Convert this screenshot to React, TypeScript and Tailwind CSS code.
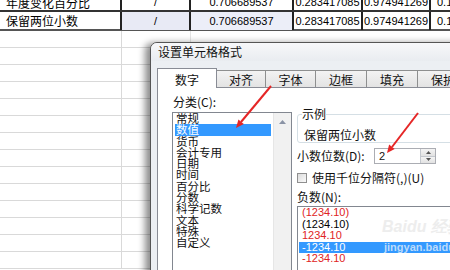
import React from "react";

const ZH = "font-['Noto_Sans_CJK_SC','Noto_Sans',sans-serif]";
const NUM = "font-['Liberation_Sans',sans-serif]";

const cols = "grid grid-cols-[122px_69px_103px_69px_68px_1fr]";

const categories = ["常规", "数值", "货币", "会计专用", "日期", "时间", "百分比", "分数", "科学记数", "文本", "特殊", "自定义"];

const negatives = [
  { t: "(1234.10)", c: "text-[#e02424]" },
  { t: "(1234.10)", c: "text-black" },
  { t: "1234.10", c: "text-[#e02424]" },
  { t: "-1234.10", c: "text-white bg-[#3399ff]", sel: true },
  { t: "-1234.10", c: "text-[#e02424]" },
];

const tabs = [
  { t: "对齐", w: "w-[50px]" },
  { t: "字体", w: "w-[51px]" },
  { t: "边框", w: "w-[52px]" },
  { t: "填充", w: "w-[52px]" },
  { t: "保护", w: "w-[52px]" },
];

function Sheet() {
  const top = "h-full leading-[19px] border-r-2 border-[#222]";
  return (
    <div className="flex flex-col text-[12px] text-black">
      <div className={`${cols} h-[18px] -mt-[7px] border-b border-[#333] overflow-hidden`}>
        <div className={`${ZH} pl-[6px] ${top}`}>年度变化百分比</div>
        <div className={`${NUM} text-center text-[11px] ${top}`}>/</div>
        <div className={`${NUM} text-center text-[11px] ${top}`}>0.706689537</div>
        <div className={`${NUM} text-center text-[11px] ${top}`}>0.283417085</div>
        <div className={`${NUM} text-center text-[11px] ${top}`}>0.974941269</div>
        <div className={`${NUM} pl-[6px] h-full leading-[19px] text-[11px]`}>0.1</div>
      </div>
      <div className={`${cols} h-[20px] border-t border-[#333] border-b-2 border-b-[#555]`}>
        <div className={`${ZH} pl-[6px] border-r-2 border-[#222] leading-[18px]`}>保留两位小数</div>
        <div className={`${NUM} text-center border-r-2 border-[#222] bg-[#e8eaf5] leading-[18px] text-[11px]`}>/</div>
        <div className={`${NUM} text-center border-r-2 border-[#222] bg-[#eceef8] leading-[18px] text-[11px]`}>0.706689537</div>
        <div className={`${NUM} text-center border-r-2 border-[#222] leading-[18px] text-[11px]`}>0.283417085</div>
        <div className={`${NUM} text-center border-r-2 border-[#222] leading-[18px] text-[11px]`}>0.974941269</div>
        <div className={`${NUM} pl-[6px] leading-[18px] text-[11px]`}>0.1</div>
      </div>
      {Array.from({ length: 14 }).map((_, i) => (
        <div key={i} className={`${cols} h-[17px] border-b border-[#d9d9d9]`}>
          <div className="border-r border-[#d9d9d9]" />
          <div className="border-r border-[#e4e4e4]" />
          <div />
          <div />
          <div />
          <div />
        </div>
      ))}
    </div>
  );
}

function Dialog() {
  return (
    <div className={`${ZH} absolute left-[150px] top-[42px] w-[320px] h-[240px] border border-[#555] rounded-tl-[7px] bg-[#eceff3] shadow-[-5px_1px_7px_rgba(0,0,0,0.45)] text-[12px] text-[#111] flex flex-col`}>
      <div className="h-[23px] pl-[7px] flex items-center bg-gradient-to-b from-[#f7f8fa] to-[#e9ecf0] rounded-tl-[6px]">
        设置单元格格式
      </div>
      <div className="pl-[6px] pt-[7px] flex flex-col">
        <div className="flex items-end">
          <div className="relative z-10 -mb-px w-[60px] h-[20px] bg-white border border-b-0 border-[#898c95] flex items-center justify-center pt-[2px]">
            数字
          </div>
          {tabs.map((t) => (
            <div
              key={t.t}
              className={`${t.w} h-[17px] -ml-px first:ml-0 border border-b-0 border-[#8e8f8f] bg-gradient-to-b from-[#f3f3f3] to-[#e3e3e3] flex items-center justify-center pt-[2px] shrink-0`}
            >
              {t.t}
            </div>
          ))}
        </div>
        <div className="border border-[#898c95] bg-white h-[200px] flex">
          <div className="pl-[14px] pt-[7px] flex flex-col">
            <div className="leading-[14px] pl-[1px]">分类(C):</div>
            <div className="mt-[3px] w-[120px] h-[160px] border border-[#828790] flex">
              <div className="flex-1 px-[2px] flex flex-col text-[11.5px]">
                {categories.map((c) => (
                  <div
                    key={c}
                    className={`h-[11.3px] leading-[11.3px] pl-[1px] whitespace-nowrap ${c === "数值" ? "bg-[#3399ff] text-white" : ""}`}
                  >
                    {c}
                  </div>
                ))}
              </div>
              <div className="w-[18px] bg-[#f1f1f1] border-l border-[#e6e6e6] flex flex-col">
                <div className="h-[17px] flex items-center justify-center">
                  <svg width="7" height="4" viewBox="0 0 7 4">
                    <path d="M0 4 L3.5 0 L7 4 Z" fill="#8a93a5" />
                  </svg>
                </div>
              </div>
            </div>
          </div>
          <div className="ml-[5px] pt-[19px] flex flex-col">
            <fieldset className="w-[200px] border border-[#d5dfe5] rounded-[3px] pl-[6px]">
              <legend className="-ml-[2px] px-0 leading-[14px]">示例</legend>
              <div className="mt-[7px] leading-[14px]">保留两位小数</div>
            </fieldset>
            <div className="mt-[5px] h-[16px] flex items-center">
              <div className="w-[77px] leading-[14px]">小数位数(D):</div>
              <div className="w-[62px] h-[16px] border border-[#abadb3] flex">
                <div className={`${NUM} flex-1 pl-[4px] text-[11px] leading-[14px]`}>2</div>
                <div className="w-[15px] flex flex-col border-l border-[#c4c8ce]">
                  <div className="flex-1 bg-gradient-to-b from-[#f4f4f4] to-[#e2e2e2] flex items-center justify-center border-b border-[#c4c8ce]">
                    <svg width="5" height="3" viewBox="0 0 5 3"><path d="M0 3 L2.5 0 L5 3 Z" fill="#555" /></svg>
                  </div>
                  <div className="flex-1 bg-gradient-to-b from-[#f4f4f4] to-[#e2e2e2] flex items-center justify-center">
                    <svg width="5" height="3" viewBox="0 0 5 3"><path d="M0 0 L2.5 3 L5 0 Z" fill="#555" /></svg>
                  </div>
                </div>
              </div>
            </div>
            <div className="mt-[7px] h-[14px] flex items-center gap-[5px]">
              <div className="w-[10px] h-[10px] border border-[#8f8f8f] bg-gradient-to-br from-[#dcdcdc] to-[#fafafa]" />
              <div className="leading-[14px]">使用千位分隔符(,)(U)</div>
            </div>
            <div className="mt-[5px] leading-[14px]">负数(N):</div>
            <div className="relative mt-[2px] w-[200px] h-[80px] border border-[#828790] pl-[1px]">
              <div className={`${NUM} absolute left-[84px] top-[12px] text-[16px] font-bold italic text-[#ededed] leading-[16px]`}>
                Baidu 经验
              </div>
              {negatives.map((n, i) => (
                <div key={i} className={`${NUM} ${n.c} relative h-[11.5px] leading-[11.5px] text-[11px] pl-[3px] flex`}>
                  <span className="w-[82px]">{n.t}</span>
                  {n.sel && <span className="text-[#bcdbfb] font-bold text-[11px]">jingyan.baidu.com</span>}
                </div>
              ))}
            </div>
          </div>
        </div>
      </div>
    </div>
  );
}

export default function App() {
  return (
    <div className="relative w-[450px] h-[270px] overflow-hidden bg-white">
      <Sheet />
      <Dialog />
      <svg className="absolute inset-0 pointer-events-none" width="450" height="270">
        <line x1="271" y1="86" x2="241" y2="122" stroke="#e52626" strokeWidth="2" />
        <polygon points="236,128 243.8,124 238.4,119.6" fill="#e52626" />
        <line x1="418" y1="113" x2="392" y2="147" stroke="#e52626" strokeWidth="2" />
        <polygon points="387,153 394.7,148.9 389.1,144.6" fill="#e52626" />
      </svg>
    </div>
  );
}
